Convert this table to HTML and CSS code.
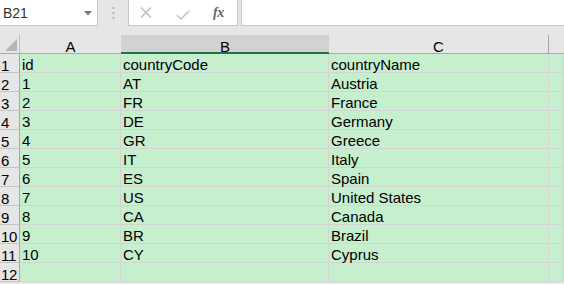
FILE: index.html
```html
<!DOCTYPE html>
<html>
<head>
<meta charset="utf-8">
<link rel="stylesheet" href="styles.css">
</head>
<body>
<div class="app">
  <div class="fbar">
    <div class="namebox">
      <span class="ref">B21</span>
      <svg class="caret" width="8" height="5" viewBox="0 0 8 5"><path d="M0 0H8L4 4.5Z" fill="#777"/></svg>
    </div>
    <div class="dots">
      <svg width="3" height="12" viewBox="0 0 3 12"><rect x="0.5" y="0" width="2" height="2" fill="#b4b4b4"/><rect x="0.5" y="5" width="2" height="2" fill="#b4b4b4"/><rect x="0.5" y="10" width="2" height="2" fill="#b4b4b4"/></svg>
    </div>
    <div class="tools">
      <svg class="ico x" width="12" height="11" viewBox="0 0 12 11"><path d="M1 0.5L11 10.5M11 0.5L1 10.5" stroke="#b9b9b9" stroke-width="1.3" fill="none"/></svg>
      <svg class="ico ok" width="14" height="10" viewBox="0 0 14 10"><path d="M0.8 5L5 9L13.2 0.8" stroke="#c4c4c4" stroke-width="1.6" fill="none"/></svg>
      <span class="fx">fx</span>
    </div>
    <div class="input"></div>
  </div>
  <div class="sheet">
    <div class="corner"><svg width="12" height="12" viewBox="0 0 12 12"><path d="M12 0V12H0Z" fill="#b4b4b4"/></svg></div>
    <div class="ch">A</div>
    <div class="ch sel">B</div>
    <div class="ch last">C</div>
    <div class="ch end"></div>

    <div class="rh">1</div><div class="cell">id</div><div class="cell">countryCode</div><div class="cell">countryName</div><div class="cell"></div>
    <div class="rh">2</div><div class="cell">1</div><div class="cell">AT</div><div class="cell">Austria</div><div class="cell"></div>
    <div class="rh">3</div><div class="cell">2</div><div class="cell">FR</div><div class="cell">France</div><div class="cell"></div>
    <div class="rh">4</div><div class="cell">3</div><div class="cell">DE</div><div class="cell">Germany</div><div class="cell"></div>
    <div class="rh">5</div><div class="cell">4</div><div class="cell">GR</div><div class="cell">Greece</div><div class="cell"></div>
    <div class="rh">6</div><div class="cell">5</div><div class="cell">IT</div><div class="cell">Italy</div><div class="cell"></div>
    <div class="rh">7</div><div class="cell">6</div><div class="cell">ES</div><div class="cell">Spain</div><div class="cell"></div>
    <div class="rh">8</div><div class="cell">7</div><div class="cell">US</div><div class="cell">United States</div><div class="cell"></div>
    <div class="rh">9</div><div class="cell">8</div><div class="cell">CA</div><div class="cell">Canada</div><div class="cell"></div>
    <div class="rh">10</div><div class="cell">9</div><div class="cell">BR</div><div class="cell">Brazil</div><div class="cell"></div>
    <div class="rh">11</div><div class="cell">10</div><div class="cell">CY</div><div class="cell">Cyprus</div><div class="cell"></div>
    <div class="rh">12</div><div class="cell"></div><div class="cell"></div><div class="cell"></div><div class="cell"></div>
  </div>
</div>
</body>
</html>
```

FILE: styles.css
```css
html, body {
  margin: 0;
  padding: 0;
  background: #e6e6e6;
}
body {
  width: 564px;
  height: 284px;
  overflow: hidden;
  font-family: "Liberation Sans", Arial, sans-serif;
  font-size: 15px;
  color: #000;
}
.app {
  display: flex;
  flex-direction: column;
}
.fbar {
  display: flex;
  height: 26px;
  margin-bottom: 9px;
}
.namebox {
  width: 98px;
  height: 26px;
  box-sizing: border-box;
  background: #fff;
  border-bottom: 1px solid #c6c6c6;
  border-right: 1px solid #c6c6c6;
  display: flex;
  align-items: center;
  justify-content: space-between;
  padding: 0 5px 0 3px;
}
.ref {
  color: #333;
  font-size: 14px;
  line-height: 16px;
  padding-top: 1px;
}
.caret {
  margin-top: 1px;
}
.dots {
  width: 30px;
  display: flex;
  align-items: center;
  justify-content: center;
  padding-left: 1px;
  box-sizing: border-box;
}
.dots svg {
  margin-top: -1px;
}
.tools {
  width: 110px;
  height: 26px;
  box-sizing: border-box;
  background: #fff;
  border: 1px solid #c6c6c6;
  border-top: none;
  display: flex;
  align-items: center;
  padding-left: 11px;
}
.tools .x {
  margin-right: 24px;
}
.tools .ok {
  margin-right: 23px;
  margin-top: 4px;
}
.fx {
  font-family: "Liberation Serif", "Times New Roman", serif;
  font-style: italic;
  font-weight: bold;
  font-size: 14px;
  color: #666;
  letter-spacing: -0.5px;
}
.input {
  flex: 1;
  margin-left: 3px;
  height: 26px;
  box-sizing: border-box;
  background: #fff;
  border-left: 1px solid #c6c6c6;
  border-bottom: 1px solid #c6c6c6;
}
.sheet {
  display: grid;
  grid-template-columns: 20px 101px 208px 220px 15px;
  grid-auto-rows: 19px;
}
.corner {
  box-sizing: border-box;
  border-right: 1px solid #c0c0c0;
  border-bottom: 1px solid #ababab;
  display: flex;
  align-items: flex-end;
  justify-content: flex-end;
  padding: 0 2px 2px 0;
}
.ch {
  box-sizing: border-box;
  border-bottom: 1px solid #ababab;
  text-align: center;
  line-height: 18px;
  padding-top: 3px;
  background: #e6e6e6;
}
.ch.sel {
  background: #d2d2d2;
  border-bottom: 2px solid #217346;
}
.ch.last {
  border-right: 1px solid #a6a6a6;
}
.rh {
  background: #e6e6e6;
  box-sizing: border-box;
  border-right: 1px solid #a6a6a6;
  border-bottom: 1px solid #c4c4c4;
  line-height: 18px;
  padding-top: 3px;
  padding-left: 1px;
  white-space: nowrap;
  letter-spacing: -0.3px;
}
.cell {
  background: #c6efce;
  box-sizing: border-box;
  border-right: 1px solid #d4d4d4;
  border-bottom: 1px solid #d4d4d4;
  padding-left: 2px;
  padding-top: 2px;
  line-height: 18px;
  white-space: nowrap;
}
```
